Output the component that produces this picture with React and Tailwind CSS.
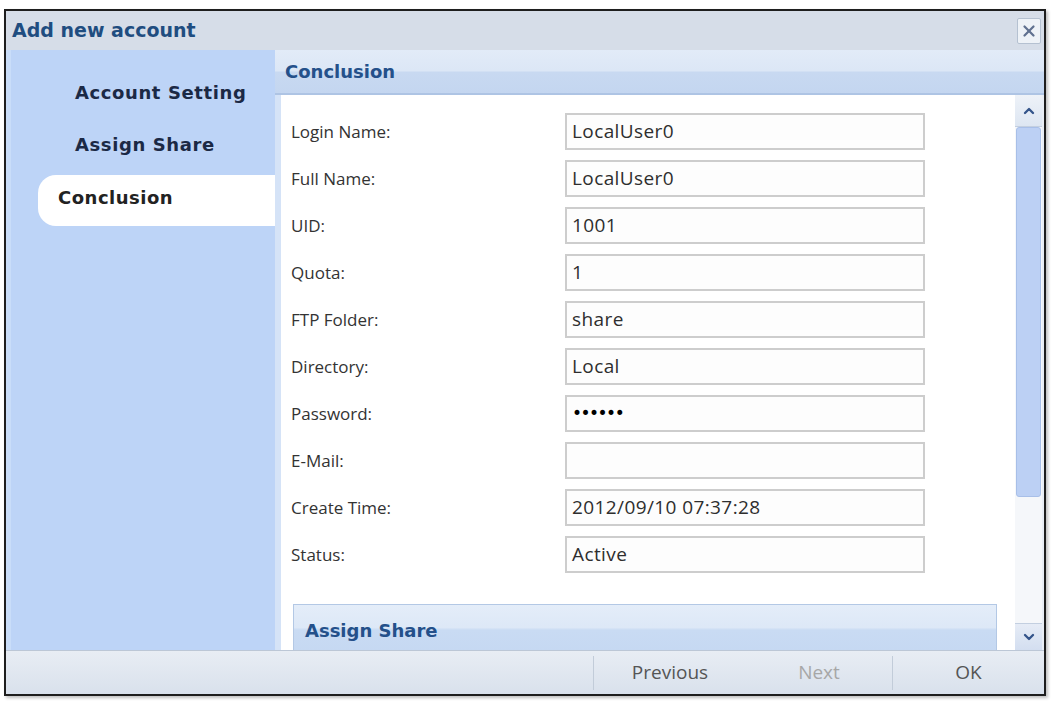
import { ChevronUp, ChevronDown, X } from 'lucide-react';

const fields = [
  { label: 'Login Name:', value: 'LocalUser0' },
  { label: 'Full Name:', value: 'LocalUser0' },
  { label: 'UID:', value: '1001' },
  { label: 'Quota:', value: '1' },
  { label: 'FTP Folder:', value: 'share' },
  { label: 'Directory:', value: 'Local' },
  { label: 'Password:', value: '••••••', secret: true },
  { label: 'E-Mail:', value: '' },
  { label: 'Create Time:', value: '2012/09/10 07:37:28' },
  { label: 'Status:', value: 'Active' },
];

const steps = ['Account Setting', 'Assign Share', 'Conclusion'];

const boldFont = { fontFamily: '"DejaVu Sans", Verdana, sans-serif' };

function FormRow({ label, value, secret }) {
  return (
    <div className="flex items-center h-[37px]">
      <div className="w-[274px] text-[17px] text-[#333]">{label}</div>
      <div className="w-[360px] h-[37px] border-2 border-[#cdcdcd] bg-[#fdfdfd] flex items-center pl-[5px]">
        {secret ? (
          <span className="text-[17px] text-black tracking-[-1.5px]" style={boldFont}>{value}</span>
        ) : (
          <span className="text-[19px] text-[#2e2e2e] tracking-[0.4px]">{value}</span>
        )}
      </div>
    </div>
  );
}

const App = () => {
  const current = 'Conclusion';

  return (
    <div className="w-[1053px] h-[704px] bg-white pt-[9px] pl-[4px]" style={{ fontFamily: '"Open Sans", sans-serif' }}>
      <div className="w-[1042px] h-[687px] border-2 border-[#1e1e1e] flex flex-col shadow-[2px_2px_3px_rgba(0,0,0,0.25)]">
        {/* title bar */}
        <div className="h-[39px] bg-[#d6dde8] flex items-center justify-between pl-[6px] pr-[3px]">
          <span className="text-[19px] font-bold text-[#1f4d80]" style={boldFont}>Add new account</span>
          <button className="w-[24px] h-[26px] border border-[#b5c1d1] bg-[#eef2f7] rounded-[2px] flex items-center justify-center">
            <X size={18} strokeWidth={3} className="text-[#60718f]" />
          </button>
        </div>

        <div className="flex-1 flex min-h-0">
          {/* step list */}
          <div className="w-[269px] bg-[#bdd4f7] border-l-[5px] border-[#c9ddf9] pt-[16px]">
            {steps.map((step) =>
              step === current ? (
                <div key={step} className="mt-[5px] ml-[27px] h-[51px] bg-white rounded-l-[18px] flex items-center pl-[20px] pb-[6px]">
                  <span className="text-[18px] font-bold text-[#222] tracking-[0.5px]" style={boldFont}>{step}</span>
                </div>
              ) : (
                <div key={step} className="h-[52px] flex items-center pl-[64px]">
                  <span className="text-[18px] font-bold text-[#1b2945] tracking-[0.6px]" style={boldFont}>{step}</span>
                </div>
              )
            )}
          </div>

          <div className="flex-1 flex flex-col min-w-0">
            {/* section header */}
            <div className="h-[45px] border-b-2 border-[#aec4e4] bg-[linear-gradient(#e2ebf8_0%,#dce7f6_48%,#c8d9f1_52%,#c4d6f0_100%)] flex items-center pl-[10px]">
              <span className="text-[18px] font-bold text-[#24508a]" style={boldFont}>Conclusion</span>
            </div>

            <div className="flex-1 flex min-h-0">
              <div className="w-[740px] bg-white border-l-[6px] border-[#d5e3f7] overflow-hidden pl-[10px] pt-[18px]">
                <div className="flex flex-col gap-[10px]">
                  {fields.map((f) => (
                    <FormRow key={f.label} {...f} />
                  ))}
                </div>
                <div className="mt-[31px] ml-[2px] w-[704px] h-[52px] border border-[#b3c8e5] bg-[linear-gradient(#e4edf9_0%,#dde8f7_45%,#c9dbf3_50%,#c5d8f2_100%)] flex items-center pl-[11px]">
                  <span className="text-[18px] font-bold text-[#24508a]" style={boldFont}>Assign Share</span>
                </div>
              </div>

              {/* scrollbar */}
              <div className="w-[27px] bg-[#f5f7fa] flex flex-col">
                <div className="h-[32px] bg-[linear-gradient(#eef2f8,#dde6f2)] border-b border-[#c3cfe0] flex items-center justify-center">
                  <ChevronUp size={16} strokeWidth={3.5} className="text-[#34548a]" />
                </div>
                <div className="h-[370px] mx-[1px] bg-[#bcd0f4] border border-[#a8bfe8] rounded-[3px]" />
                <div className="flex-1" />
                <div className="h-[27px] bg-[linear-gradient(#e6ecf6,#d3def0)] border-t border-[#c3cfe0] flex items-center justify-center">
                  <ChevronDown size={16} strokeWidth={3.5} className="text-[#34548a]" />
                </div>
              </div>
              <div className="w-[2px] bg-[#e9eef5]" />
            </div>
          </div>
        </div>

        {/* footer buttons */}
        <div className="h-[44px] border-t border-[#bcc7d6] bg-[linear-gradient(#e8edf4,#d9e1ec)] flex items-center justify-end">
          <div className="w-px h-[34px] bg-[#c2ccd9]" />
          <button className="w-[152px] h-full text-[19px] text-[#555]">Previous</button>
          <button className="w-[146px] h-full text-[19px] text-[#a7a7a7]">Next</button>
          <div className="w-px h-[34px] bg-[#c2ccd9]" />
          <button className="w-[151px] h-full text-[19px] text-[#555]">OK</button>
        </div>
      </div>
    </div>
  );
};

export default App;
